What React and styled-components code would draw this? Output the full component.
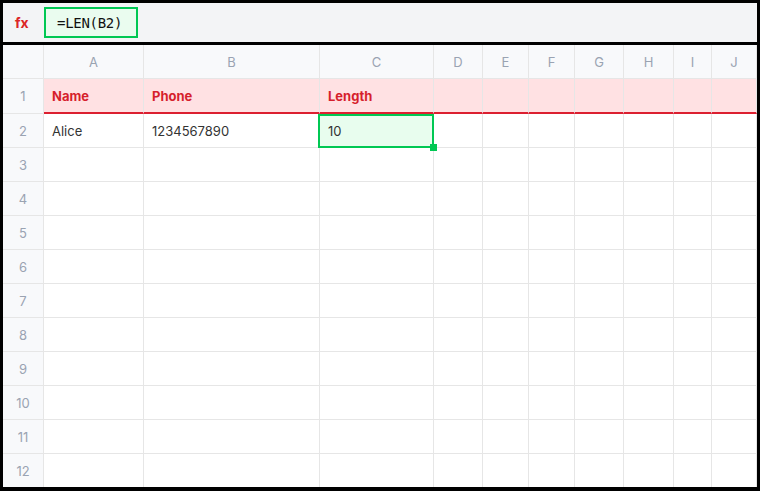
import React from "react";
import styled, { createGlobalStyle } from "styled-components";

const Global = createGlobalStyle`
  html, body { margin: 0; padding: 0; background: #000; }
  body { font-family: Inter, "Noto Sans", sans-serif; }
  * { box-sizing: border-box; }
`;

const Frame = styled.div`
  width: 760px;
  height: 491px;
  border-style: solid;
  border-color: #000;
  border-width: 3px 3px 4px 3px;
  background: #fff;
  overflow: hidden;
  display: flex;
  flex-direction: column;
`;

const FormulaBar = styled.div`
  height: 42px;
  flex: none;
  background: #f3f4f6;
  border-bottom: 3px solid #000;
  display: flex;
  align-items: center;
  padding: 0 0 0 12px;
  gap: 14px;
`;

const Fx = styled.span`
  color: #dc2626;
  font-weight: 700;
  font-size: 14px;
  width: 15px;
  font-family: Inter, sans-serif;
`;

const FormulaInput = styled.div`
  width: 94px;
  height: 31px;
  border: 2px solid #00c853;
  background: #eafcef;
  display: flex;
  align-items: center;
  padding-left: 11px;
  font-family: "DejaVu Sans Mono", "Liberation Mono", monospace;
  font-size: 14px;
  color: #111;
  letter-spacing: -0.3px;
`;

const Grid = styled.div`
  display: grid;
  grid-template-columns: 41px 100px 176px 114px 49px 46px 46px 49px 50px 38px 45px;
  grid-template-rows: 34px 35px repeat(11, 34px);
  overflow: hidden;
  flex: 1;
  align-content: start;
`;

const Cell = styled.div`
  position: relative;
  z-index: ${(p) => (p.$selected ? 2 : "auto")};
  border-right: 1px solid #e6e6e6;
  border-bottom: ${(p) => (p.$red ? "2px solid #dc1f30" : "1px solid #e6e6e6")};
  background: ${(p) =>
    p.$selected ? "#e8fdee" : p.$red ? "#ffe1e3" : p.$head ? "#f8f9fb" : "#fff"};
  display: flex;
  align-items: center;
  justify-content: ${(p) => (p.$head ? "center" : "flex-start")};
  padding: ${(p) => (p.$head ? "0" : "0 8px")};
  font-size: 13px;
  color: ${(p) => (p.$head ? "#9aa3b2" : p.$red ? "#d61f2c" : "#333")};
  font-weight: ${(p) => (p.$red && !p.$head ? 700 : 400)};
  white-space: nowrap;
`;

const Selection = styled.div`
  position: absolute;
  top: 0;
  bottom: -1px;
  left: -2px;
  right: -1px;
  border: 2px solid #00c853;
  pointer-events: none;
`;

const Handle = styled.div`
  position: absolute;
  right: -5px;
  bottom: -5px;
  width: 7px;
  height: 7px;
  background: #00c853;
`;

const cols = ["A", "B", "C", "D", "E", "F", "G", "H", "I", "J"];

export default function App() {
  const data = {
    1: ["Name", "Phone", "Length"],
    2: ["Alice", "1234567890", "10"],
  };
  const rows = Array.from({ length: 12 }, (_, i) => i + 1);
  return (
    <>
      <Global />
      <Frame>
        <FormulaBar>
          <Fx>fx</Fx>
          <FormulaInput>=LEN(B2)</FormulaInput>
        </FormulaBar>
        <Grid>
          <Cell $head />
          {cols.map((c) => (
            <Cell key={c} $head>
              {c}
            </Cell>
          ))}
          {rows.map((r) => (
            <React.Fragment key={r}>
              <Cell $head>{r}</Cell>
              {cols.map((c, ci) => {
                const val = data[r] ? data[r][ci] : undefined;
                const selected = r === 2 && ci === 2;
                return (
                  <Cell key={c} $red={r === 1} $selected={selected}>
                    {val}
                    {selected && (
                      <Selection>
                        <Handle />
                      </Selection>
                    )}
                  </Cell>
                );
              })}
            </React.Fragment>
          ))}
        </Grid>
      </Frame>
    </>
  );
}
